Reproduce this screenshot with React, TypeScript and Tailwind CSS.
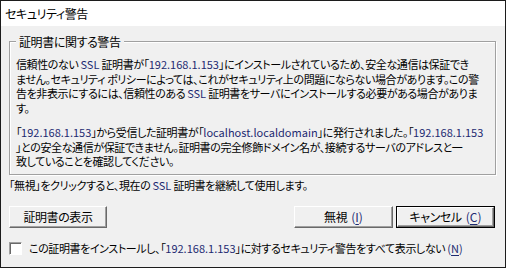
import type { ReactNode } from 'react';

const jp = "font-['Noto_Sans_CJK_JP','Noto_Sans',sans-serif] [font-feature-settings:'palt']";

// ASCII runs are rendered in a slightly blue tint, like ClearType in the original
function A({ children }: { children: ReactNode }) {
  return <span className="tracking-normal text-[#1d2a70]">{children}</span>;
}

function Mn({ k }: { k: string }) {
  return (
    <A>
      (<span className="underline underline-offset-2">{k}</span>)
    </A>
  );
}

function Button({ children, isDefault, className = '' }: { children: ReactNode; isDefault?: boolean; className?: string }) {
  return (
    <div className={`${isDefault ? 'border border-black' : ''} ${className}`}>
      <button
        className={`flex h-full w-full items-center justify-center gap-[4px] border-t border-l border-t-white border-l-white border-r border-b border-r-[#696969] border-b-[#696969] bg-[#f0f0f0] text-[12px] leading-none tracking-[-0.4px] text-black shadow-[inset_-1px_-1px_0_#a0a0a0]`}
      >
        {children}
      </button>
    </div>
  );
}

export default function App() {
  return (
    <div className={`${jp} flex h-[268px] w-[506px] flex-col overflow-hidden border border-[#1c1c1c] bg-[#f0f0f0] text-[11px] tracking-[-0.4px] text-black`}>
      {/* Title bar */}
      <div className="flex h-[25px] shrink-0 items-center bg-white pl-[4px] text-[12px]">セキュリティ警告</div>

      {/* Body */}
      <div className="flex flex-1 flex-col px-[8px]">
        {/* Group box */}
        <div className="relative mt-[15px] h-[134px] w-[487px] shrink-0 border border-[#a0a0a0] shadow-[1px_1px_0_white,inset_1px_1px_0_white]">
          <span className="absolute -top-[8px] left-[6px] bg-[#f0f0f0] px-[3px] text-[12px] leading-[15px]">証明書に関する警告</span>
          <div className="whitespace-nowrap pt-[15px] pl-[6px] leading-[14.7px]">
            <p>
              信頼性のない <A>SSL</A> 証明書が「<A>192.168.1.153</A>」にインストールされているため、安全な通信は保証でき
              <br />
              ません。セキュリティ ポリシーによっては、これがセキュリティ上の問題にならない場合があります。この警
              <br />
              告を非表示にするには、信頼性のある <A>SSL</A> 証明書をサーバにインストールする必要がある場合がありま
              <br />
              す。
            </p>
            <p className="mt-[9px]">
              「<A>192.168.1.153</A>」から受信した証明書が「<A>localhost.localdomain</A>」に発行されました。「<A>192.168.1.153</A>
              <br />
              」との安全な通信が保証できません。証明書の完全修飾ドメイン名が、接続するサーバのアドレスと一
              <br />
              致していることを確認してください。
            </p>
          </div>
        </div>

        <p className="mt-[3px] whitespace-nowrap leading-[15px]">
          「無視」をクリックすると、現在の <A>SSL</A> 証明書を継続して使用します。
        </p>

        {/* Buttons */}
        <div className="mt-[13px] flex h-[22px] shrink-0 items-stretch">
          <Button className="w-[98px]">証明書の表示</Button>
          <div className="flex-1" />
          <Button className="w-[99px]">
            無視<Mn k="I" />
          </Button>
          <Button isDefault className="ml-[3px] mr-[2px] w-[99px]">
            キャンセル<Mn k="C" />
          </Button>
        </div>

        {/* Checkbox */}
        <label className="mt-[13px] flex items-center whitespace-nowrap">
          <span className="h-[13px] w-[13px] shrink-0 border-t border-l border-t-[#a0a0a0] border-l-[#a0a0a0] border-r border-b border-r-white border-b-white bg-white shadow-[inset_1px_1px_0_#696969]" />
          <span className="ml-[7px] leading-[15px]">
            この証明書をインストールし、「<A>192.168.1.153</A>」に対するセキュリティ警告をすべて表示しない <Mn k="N" />
          </span>
        </label>
      </div>
    </div>
  );
}
